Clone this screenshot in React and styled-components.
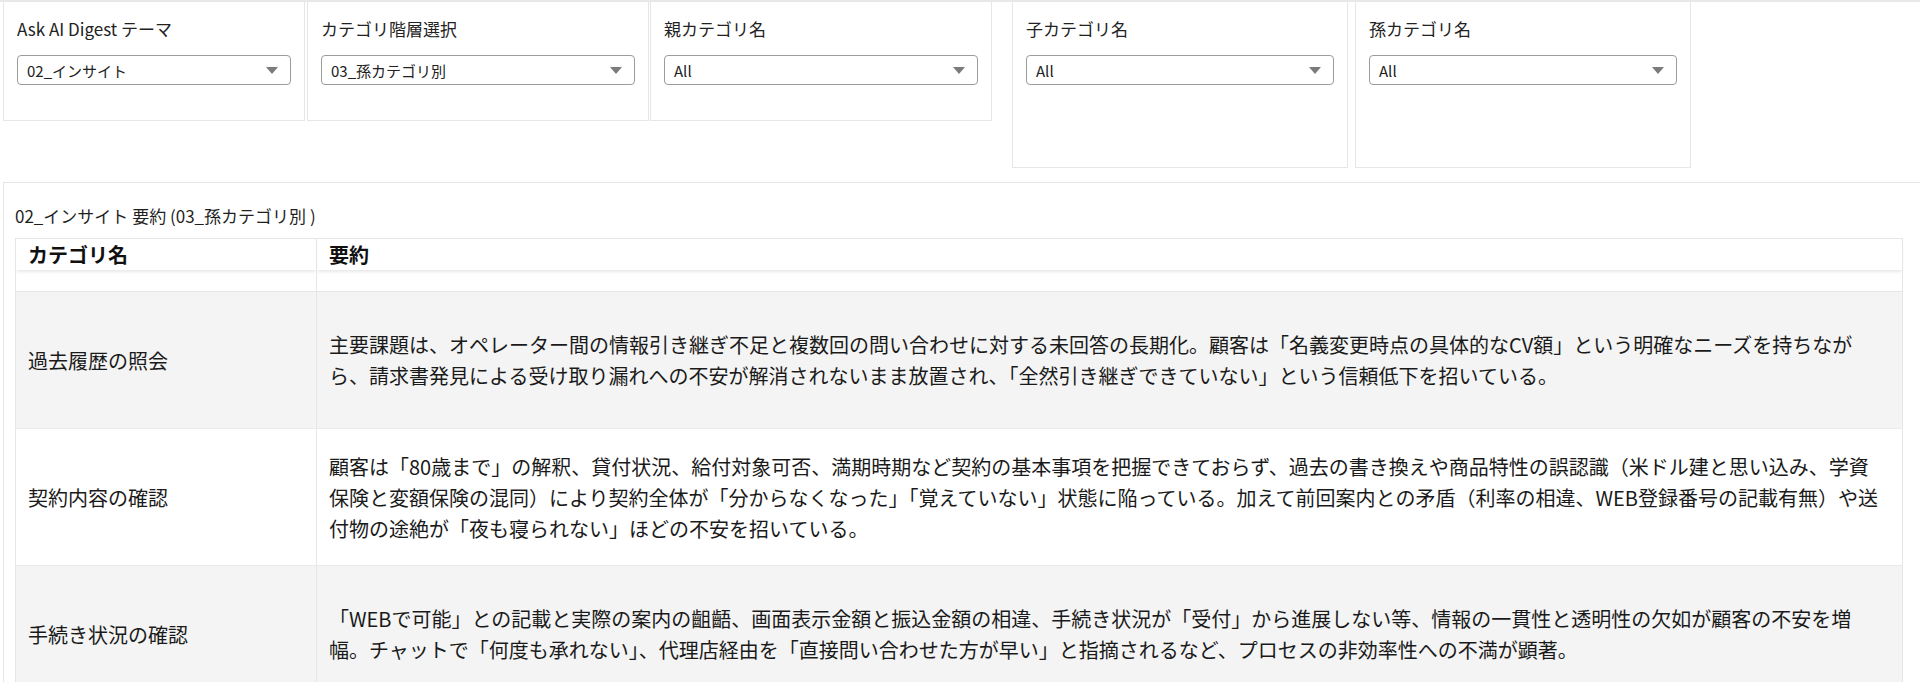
import styled, { createGlobalStyle } from "styled-components";

const GlobalStyle = createGlobalStyle`
  html, body {
    margin: 0;
    padding: 0;
    background: #ffffff;
    overflow: hidden;
  }
  body {
    font-family: "Noto Sans CJK JP", "Noto Sans", sans-serif;
    color: #1f1f1f;
  }
`;

const Page = styled.div`
  border-top: 2px solid #e8e8e8;
  padding-left: 3px;
`;

const FilterRow = styled.div`
  display: flex;
  align-items: flex-start;
`;

const FilterCard = styled.div`
  box-sizing: border-box;
  width: ${(props) => props.$width}px;
  height: ${(props) => props.$height}px;
  margin-left: ${(props) => props.$gap || 0}px;
  margin-top: -1px;
  border: 1px solid #e6e6e6;
  background: #fff;
  padding: 15px 13px 0 13px;
`;

const Label = styled.div`
  font-size: 17px;
  line-height: 24px;
  color: #222;
  white-space: nowrap;
`;

const Select = styled.div`
  box-sizing: border-box;
  height: 30px;
  margin-top: 14px;
  border: 1px solid #9c9c9c;
  border-radius: 4px;
  display: flex;
  align-items: center;
  justify-content: space-between;
  padding: 0 12px 0 9px;
  background: #fff;
`;

const SelectValue = styled.span`
  font-size: 15px;
  color: #222;
  white-space: nowrap;
`;

const Caret = styled.span`
  width: 0;
  height: 0;
  border-left: 6px solid transparent;
  border-right: 6px solid transparent;
  border-top: 7px solid #7b7b7b;
`;

const SummaryPanel = styled.div`
  margin-top: 14px;
  border: 1px solid #e6e6e6;
  border-right: none;
  background: #fff;
  padding: 0 0 0 11px;
`;

const PanelTitle = styled.div`
  font-size: 17px;
  line-height: 24px;
  padding: 21px 0 0 0;
  color: #1f1f1f;
`;

const Table = styled.table`
  margin-top: 10px;
  border-collapse: collapse;
  table-layout: fixed;
  width: 1888px;
  border-left: 1px solid #e6e6e6;
  border-right: 1px solid #e6e6e6;
`;

const HeadCell = styled.th`
  height: 31px;
  padding: 0 12px;
  text-align: left;
  font-size: 20px;
  font-weight: 700;
  color: #111;
  border-top: 1px solid #e6e6e6;
  border-left: 1px solid #e6e6e6;
  box-shadow: 0 3px 3px -1px rgba(0, 0, 0, 0.09);
  &:first-child {
    border-left: none;
  }
`;

const SpacerCell = styled.td`
  height: 21px;
  padding: 0;
  border-left: 1px solid #e6e6e6;
  border-bottom: 1px solid #e6e6e6;
  &:first-child {
    border-left: none;
  }
`;

const Row = styled.tr`
  background: ${(props) => (props.$shaded ? "#f4f4f4" : "#ffffff")};
`;

const Cell = styled.td`
  height: 136px;
  padding: 0 12px;
  font-size: 20px;
  line-height: 31px;
  color: #1a1a1a;
  vertical-align: middle;
  border-left: 1px solid #e6e6e6;
  border-bottom: 1px solid #ebebeb;
  &:first-child {
    border-left: none;
  }
`;

const Line = styled.span`
  display: block;
  white-space: nowrap;
`;

const filters = [
  { label: "Ask AI Digest テーマ", value: "02_インサイト", width: 302, height: 120, gap: 0 },
  { label: "カテゴリ階層選択", value: "03_孫カテゴリ別", width: 342, height: 120, gap: 2 },
  { label: "親カテゴリ名", value: "All", width: 342, height: 120, gap: 1 },
  { label: "子カテゴリ名", value: "All", width: 336, height: 167, gap: 20 },
  { label: "孫カテゴリ名", value: "All", width: 336, height: 167, gap: 7 },
];

const rows = [
  {
    category: "",
    lines: [],
  },
  {
    category: "過去履歴の照会",
    lines: [
      "主要課題は、オペレーター間の情報引き継ぎ不足と複数回の問い合わせに対する未回答の長期化。顧客は「名義変更時点の具体的なCV額」という明確なニーズを持ちなが",
      "ら、請求書発見による受け取り漏れへの不安が解消されないまま放置され、「全然引き継ぎできていない」という信頼低下を招いている。",
    ],
  },
  {
    category: "契約内容の確認",
    lines: [
      "顧客は「80歳まで」の解釈、貸付状況、給付対象可否、満期時期など契約の基本事項を把握できておらず、過去の書き換えや商品特性の誤認識（米ドル建と思い込み、学資",
      "保険と変額保険の混同）により契約全体が「分からなくなった」「覚えていない」状態に陥っている。加えて前回案内との矛盾（利率の相違、WEB登録番号の記載有無）や送",
      "付物の途絶が「夜も寝られない」ほどの不安を招いている。",
    ],
  },
  {
    category: "手続き状況の確認",
    lines: [
      "「WEBで可能」との記載と実際の案内の齟齬、画面表示金額と振込金額の相違、手続き状況が「受付」から進展しない等、情報の一貫性と透明性の欠如が顧客の不安を増",
      "幅。チャットで「何度も承れない」、代理店経由を「直接問い合わせた方が早い」と指摘されるなど、プロセスの非効率性への不満が顕著。",
    ],
  },
];

const App = () => {
  return (
    <>
      <GlobalStyle />
      <Page>
        <FilterRow>
          {filters.map((f) => (
            <FilterCard key={f.label} $width={f.width} $height={f.height} $gap={f.gap}>
              <Label>{f.label}</Label>
              <Select>
                <SelectValue>{f.value}</SelectValue>
                <Caret />
              </Select>
            </FilterCard>
          ))}
        </FilterRow>

        <SummaryPanel>
          <PanelTitle>02_インサイト 要約 (03_孫カテゴリ別 )</PanelTitle>
          <Table>
            <colgroup>
              <col style={{ width: 301 }} />
              <col />
            </colgroup>
            <thead>
              <tr>
                <HeadCell>カテゴリ名</HeadCell>
                <HeadCell>要約</HeadCell>
              </tr>
            </thead>
            <tbody>
              <tr>
                <SpacerCell />
                <SpacerCell />
              </tr>
              {rows.slice(1).map((row, i) => (
                <Row key={row.category} $shaded={i % 2 === 0}>
                  <Cell>{row.category}</Cell>
                  <Cell>
                    {row.lines.map((line) => (
                      <Line key={line}>{line}</Line>
                    ))}
                  </Cell>
                </Row>
              ))}
            </tbody>
          </Table>
        </SummaryPanel>
      </Page>
    </>
  );
};

export default App;
